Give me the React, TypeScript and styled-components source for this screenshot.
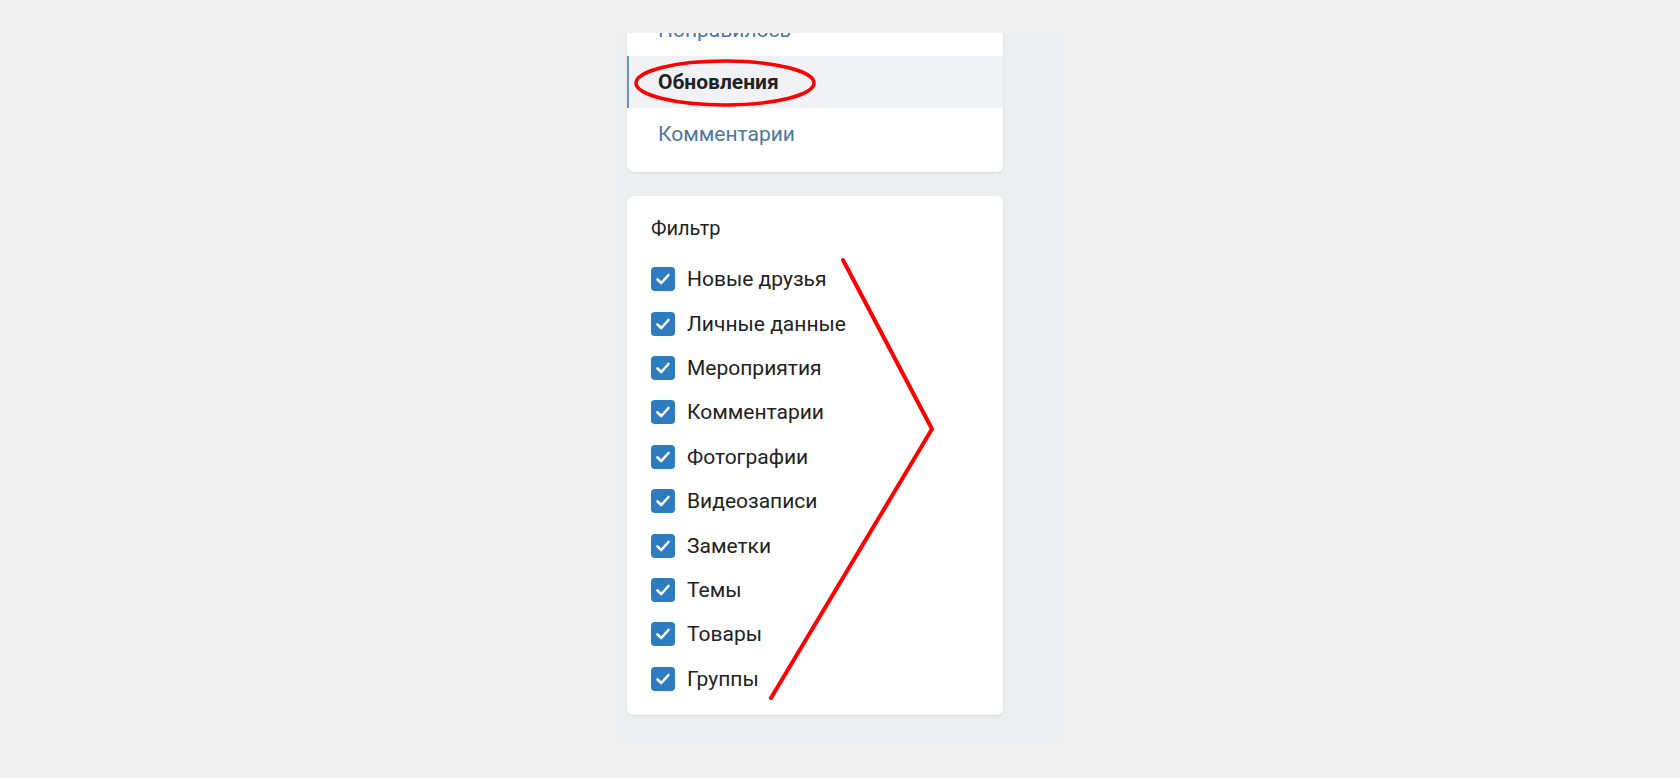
import { createGlobalStyle } from "styled-components"
import styled from "styled-components"

const GlobalStyle = createGlobalStyle`
    body {
        margin: 0;
        background: #f1f1f1;
        font-family: Roboto, "Liberation Sans", sans-serif;
    }
`

const Page = styled.div`
    position: relative;
    width: 1680px;
    height: 778px;
    overflow: hidden;
    display: flex;
    justify-content: center;
    padding-top: 33px;
    box-sizing: border-box;
`

const Panel = styled.div`
    width: 446px;
    height: 710px;
    box-sizing: border-box;
    padding: 0 60px 0 10px;
    background: #edeef0;
    overflow: hidden;
    display: flex;
    flex-direction: column;
    gap: 24px;
`

const Card = styled.div`
    background: #fff;
    border-radius: 6px;
    box-shadow: 0 1px 2px rgba(0, 0, 0, 0.09);
`

const MenuCard = styled(Card)`
    margin-top: -37px;
    padding: 8px 0 12px;
`

const MenuItem = styled.div<{ $active?: boolean }>`
    height: 52px;
    display: flex;
    align-items: center;
    box-sizing: border-box;
    padding-left: ${p => (p.$active ? "29px" : "31px")};
    border-left: ${p => (p.$active ? "2px solid #6a93c2" : "none")};
    background: ${p => (p.$active ? "#f0f2f5" : "transparent")};
    color: ${p => (p.$active ? "#222" : "#4d76a1")};
    font-weight: ${p => (p.$active ? 700 : 400)};
    font-size: 21px;
`

const FilterCard = styled(Card)`
    padding: 20px 24px 14px;
`

const FilterTitle = styled.div`
    line-height: 24px;
    font-size: 20px;
    color: #222;
    margin-bottom: 17px;
`

const CheckRow = styled.label`
    height: 44.4px;
    display: flex;
    align-items: center;
    gap: 12px;
    font-size: 21px;
    color: #222;
`

const CheckBox = styled.span`
    width: 24px;
    height: 24px;
    border-radius: 4px;
    background: #2d7cc0;
    display: flex;
    align-items: center;
    justify-content: center;
    flex-shrink: 0;
`

const Marks = styled.svg`
    position: absolute;
    left: 0;
    top: 0;
    pointer-events: none;
`

const filters = [
    "Новые друзья",
    "Личные данные",
    "Мероприятия",
    "Комментарии",
    "Фотографии",
    "Видеозаписи",
    "Заметки",
    "Темы",
    "Товары",
    "Группы",
]

export default function App() {
    return <>
        <GlobalStyle />
        <Page>
            <Panel>
                <MenuCard>
                    <MenuItem>Понравилось</MenuItem>
                    <MenuItem $active>Обновления</MenuItem>
                    <MenuItem>Комментарии</MenuItem>
                </MenuCard>
                <FilterCard>
                    <FilterTitle>Фильтр</FilterTitle>
                    {filters.map(f => (
                        <CheckRow key={f}>
                            <CheckBox>
                                <svg width="18" height="18" viewBox="0 0 18 18">
                                    <path d="M3.5 9.5 L7.3 13 L14.5 5" fill="none" stroke="#fff" strokeWidth="2.6" strokeLinecap="round" strokeLinejoin="round" />
                                </svg>
                            </CheckBox>
                            {f}
                        </CheckRow>
                    ))}
                </FilterCard>
            </Panel>
            <Marks width="1680" height="778" viewBox="0 0 1680 778">
                <ellipse cx="725" cy="83" rx="89" ry="22" fill="none" stroke="#ff0000" strokeWidth="3.5" />
                <polyline points="843,260 932,429 771,698" fill="none" stroke="#ff0000" strokeWidth="4" strokeLinecap="round" strokeLinejoin="miter" />
            </Marks>
        </Page>
    </>
}
